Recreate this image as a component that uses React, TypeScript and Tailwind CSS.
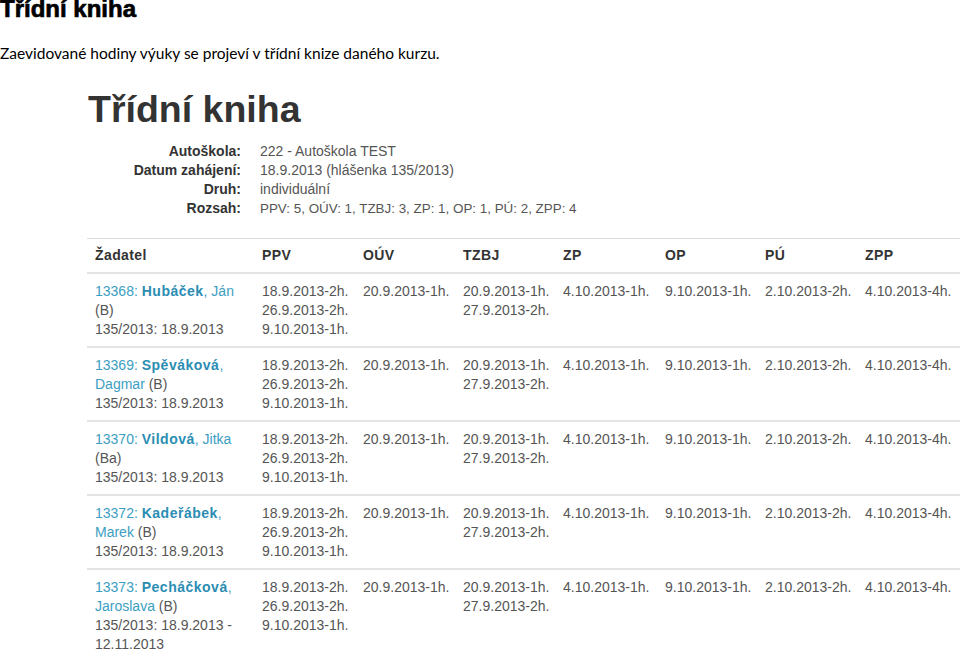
import React from "react";

type Row = {
  id: string;
  surname: string;
  first: string;
  firstOnSecond: boolean;
  cat: string;
  dateLines: string[];
};

const rows: Row[] = [
  { id: "13368", surname: "Hubáček", first: "Ján", firstOnSecond: false, cat: "(B)", dateLines: ["135/2013: 18.9.2013"] },
  { id: "13369", surname: "Spěváková", first: "Dagmar", firstOnSecond: true, cat: "(B)", dateLines: ["135/2013: 18.9.2013"] },
  { id: "13370", surname: "Vildová", first: "Jitka", firstOnSecond: false, cat: "(Ba)", dateLines: ["135/2013: 18.9.2013"] },
  { id: "13372", surname: "Kadeřábek", first: "Marek", firstOnSecond: true, cat: "(B)", dateLines: ["135/2013: 18.9.2013"] },
  { id: "13373", surname: "Pecháčková", first: "Jaroslava", firstOnSecond: true, cat: "(B)", dateLines: ["135/2013: 18.9.2013 -", "12.11.2013"] },
];

const hours: string[][] = [
  ["18.9.2013-2h.", "26.9.2013-2h.", "9.10.2013-1h."],
  ["20.9.2013-1h."],
  ["20.9.2013-1h.", "27.9.2013-2h."],
  ["4.10.2013-1h."],
  ["9.10.2013-1h."],
  ["2.10.2013-2h."],
  ["4.10.2013-4h."],
];

const heads = ["Žadatel", "PPV", "OÚV", "TZBJ", "ZP", "OP", "PÚ", "ZPP"];
const widths = ["w-[167px]", "w-[101px]", "w-[100px]", "w-[100px]", "w-[102px]", "w-[100px]", "w-[100px]", "w-[120px]"];

function Applicant({ r }: { r: Row }) {
  const link = "text-[#3b9ec2]";
  const bold = "font-bold text-[#2b8db3] tracking-[0.5px]";
  return (
    <div className="whitespace-nowrap">
      {r.firstOnSecond ? (
        <>
          <div>
            <span className={link}>{r.id}: </span>
            <span className={bold}>{r.surname}</span>
            <span className={link}>,</span>
          </div>
          <div>
            <span className={link}>{r.first}</span> {r.cat}
          </div>
        </>
      ) : (
        <>
          <div>
            <span className={link}>{r.id}: </span>
            <span className={bold}>{r.surname}</span>
            <span className={link}>, {r.first}</span>
          </div>
          <div>{r.cat}</div>
        </>
      )}
      {r.dateLines.map((d) => (
        <div key={d}>{d}</div>
      ))}
    </div>
  );
}

export default function App() {
  return (
    <div className="w-[960px] h-[649px] overflow-hidden bg-white">
      <h1
        className="-mt-[3px] text-[24px] leading-[24px] font-bold text-black [-webkit-text-stroke:0.7px_black]"
        style={{ fontFamily: "'Liberation Sans', Arial, sans-serif" }}
      >
        Třídní kniha
      </h1>
      <p
        className="mt-[22px] text-[15.5px] leading-[20px] text-black"
        style={{ fontFamily: "Lato, 'Open Sans', sans-serif" }}
      >
        Zaevidované hodiny výuky se projeví v třídní knize daného kurzu.
      </p>

      <div
        className="ml-[87px] mt-[25px] text-[14px] leading-[19px] text-[#555]"
        style={{ fontFamily: "'Liberation Sans', Arial, sans-serif" }}
      >
        <h2 className="ml-[1px] text-[37.5px] leading-[42px] font-bold text-[#333]">Třídní kniha</h2>

        <div className="mt-[12px] grid grid-cols-[154px_1fr] gap-x-[19px]">
          <div className="text-right font-bold text-[#333]">Autoškola:</div>
          <div>222 - Autoškola TEST</div>
          <div className="text-right font-bold text-[#333]">Datum zahájení:</div>
          <div>18.9.2013 (hlášenka 135/2013)</div>
          <div className="text-right font-bold text-[#333]">Druh:</div>
          <div>individuální</div>
          <div className="text-right font-bold text-[#333]">Rozsah:</div>
          <div className="text-[13.4px]">PPV: 5, OÚV: 1, TZBJ: 3, ZP: 1, OP: 1, PÚ: 2, ZPP: 4</div>
        </div>

        <table className="mt-[20px] table-fixed border-collapse w-[890px]">
          <colgroup>
            {widths.map((w, i) => (
              <col key={i} className={w} />
            ))}
          </colgroup>
          <thead>
            <tr className="border-t border-[#dddddd]">
              {heads.map((h) => (
                <th
                  key={h}
                  className="px-[8px] pt-[7px] pb-[7px] text-left align-top font-bold text-[#333] tracking-[0.4px]"
                >
                  {h}
                </th>
              ))}
            </tr>
          </thead>
          <tbody>
            {rows.map((r) => (
              <tr key={r.id} className="border-t-[2px] border-[#e4e4e4]">
                <td className="px-[8px] pt-[8px] pb-[7px] align-top">
                  <Applicant r={r} />
                </td>
                {hours.map((cell, i) => (
                  <td key={i} className="px-[8px] pt-[8px] pb-[7px] align-top whitespace-nowrap">
                    {cell.map((l, j) => (
                      <div key={j}>{l}</div>
                    ))}
                  </td>
                ))}
              </tr>
            ))}
          </tbody>
        </table>
      </div>
    </div>
  );
}
